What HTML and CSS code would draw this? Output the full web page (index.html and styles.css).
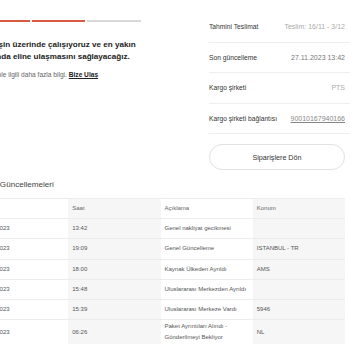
FILE: index.html
```html
<!DOCTYPE html>
<html lang="tr">
<head>
<meta charset="utf-8">
<title>Sipariş Takibi</title>
<link rel="stylesheet" href="styles.css">
</head>
<body>
<div class="page">
  <section class="top">
    <div class="status">
      <div class="progress">
        <span class="seg seg-done"></span>
        <span class="seg seg-done"></span>
        <span class="seg"></span>
      </div>
      <p class="status-title">Siparişin üzerinde çalışıyoruz ve en yakın zamanda eline ulaşmasını sağlayacağız.</p>
      <p class="status-help">Siparişinle ilgili daha fazla bilgi. <a class="help-link" href="#">Bize Ulaş</a></p>
    </div>
    <div class="details">
      <div class="row"><span class="label">Tahmini Teslimat</span><span class="value light">Teslim: 16/11 - 3/12</span></div>
      <div class="row"><span class="label">Son güncelleme</span><span class="value">27.11.2023 13:42</span></div>
      <div class="row"><span class="label">Kargo şirketi</span><span class="value light">PTS</span></div>
      <div class="row"><span class="label">Kargo şirketi bağlantısı</span><a class="value link" href="#">90010167940166</a></div>
      <button class="back-btn" type="button">Siparişlere Dön</button>
    </div>
  </section>

  <h2 class="updates-title">Kargo Güncellemeleri</h2>
  <table class="updates">
    <thead>
      <tr><th>Tarih</th><th class="alt">Saat</th><th>Açıklama</th><th class="alt">Konum</th></tr>
    </thead>
    <tbody>
      <tr><td>27.11.2023</td><td class="alt">13:42</td><td>Genel nakliyat gecikmesi</td><td class="alt"></td></tr>
      <tr><td>26.11.2023</td><td class="alt">19:09</td><td>Genel Güncelleme</td><td class="alt">ISTANBUL - TR</td></tr>
      <tr><td>18.11.2023</td><td class="alt">18:00</td><td>Kaynak Ülkeden Ayrıldı</td><td class="alt">AMS</td></tr>
      <tr><td>17.11.2023</td><td class="alt">15:48</td><td class="nowrap">Uluslararası Merkezden Ayrıldı</td><td class="alt"></td></tr>
      <tr><td>17.11.2023</td><td class="alt">15:39</td><td>Uluslararası Merkeze Vardı</td><td class="alt">5946</td></tr>
      <tr><td>16.11.2023</td><td class="alt">06:26</td><td>Paket Ayrıntıları Alındı - Gönderilmeyi Bekliyor</td><td class="alt">NL</td></tr>
    </tbody>
  </table>
</div>
</body>
</html>
```

FILE: styles.css
```css
html, body {
  margin: 0;
  padding: 0;
  background: #fff;
  overflow: hidden;
}

body {
  font-family: "Liberation Sans", Arial, Helvetica, sans-serif;
  color: #333;
}

.page {
  width: 374px;
  margin-left: -24px;
}

.top {
  display: grid;
  grid-template-columns: 170px 1fr;
  column-gap: 63px;
}

.status {
  padding-top: 20px;
}

.progress {
  display: flex;
  gap: 2px;
  width: 165px;
}

.seg {
  flex: 1;
  height: 2px;
  background: #d9d9d9;
}

.seg-done {
  background: #d9583f;
}

.status-title {
  margin: 17px 0 0;
  font-size: 8.1px;
  line-height: 12px;
  font-weight: bold;
  color: #222;
}

.status-help {
  margin: 7px 0 0;
  font-size: 6.6px;
  line-height: 10px;
  color: #666;
}

.help-link {
  color: #222;
  font-weight: bold;
  text-decoration: underline;
}

.details {
  padding-top: 12px;
  display: flex;
  flex-direction: column;
}

.row {
  display: flex;
  justify-content: space-between;
  align-items: center;
  height: 29.5px;
  border-bottom: 1px solid #eeeeee;
  padding-right: 5px;
}

.label {
  font-size: 6.7px;
  color: #333;
}

.value {
  font-size: 7px;
  color: #777;
}

.value.light {
  color: #aaa;
}

.value.link {
  color: #888;
  text-decoration: underline;
}

.back-btn {
  margin: 10px 5px 0 0;
  height: 26px;
  border: 1px solid #e2e2e2;
  border-radius: 13px;
  background: #fff;
  font-family: inherit;
  font-size: 7.2px;
  color: #333;
  cursor: pointer;
}

.updates-title {
  margin: 10px 0 8px;
  font-size: 8.1px;
  line-height: 10px;
  font-weight: normal;
  color: #444;
}

.updates {
  width: 369px;
  border-collapse: collapse;
  table-layout: fixed;
  font-size: 6px;
  color: #555;
}

.updates th,
.updates td {
  text-align: left;
  font-weight: normal;
  height: 17.2px;
  padding: 1px 1px 1px 4px;
  line-height: 11px;
  border-top: 1px solid #ececec;
  vertical-align: middle;
}

.updates .nowrap {
  white-space: nowrap;
}

.updates th {
  color: #666;
}

.updates .alt {
  background: #f6f6f6;
}
```
